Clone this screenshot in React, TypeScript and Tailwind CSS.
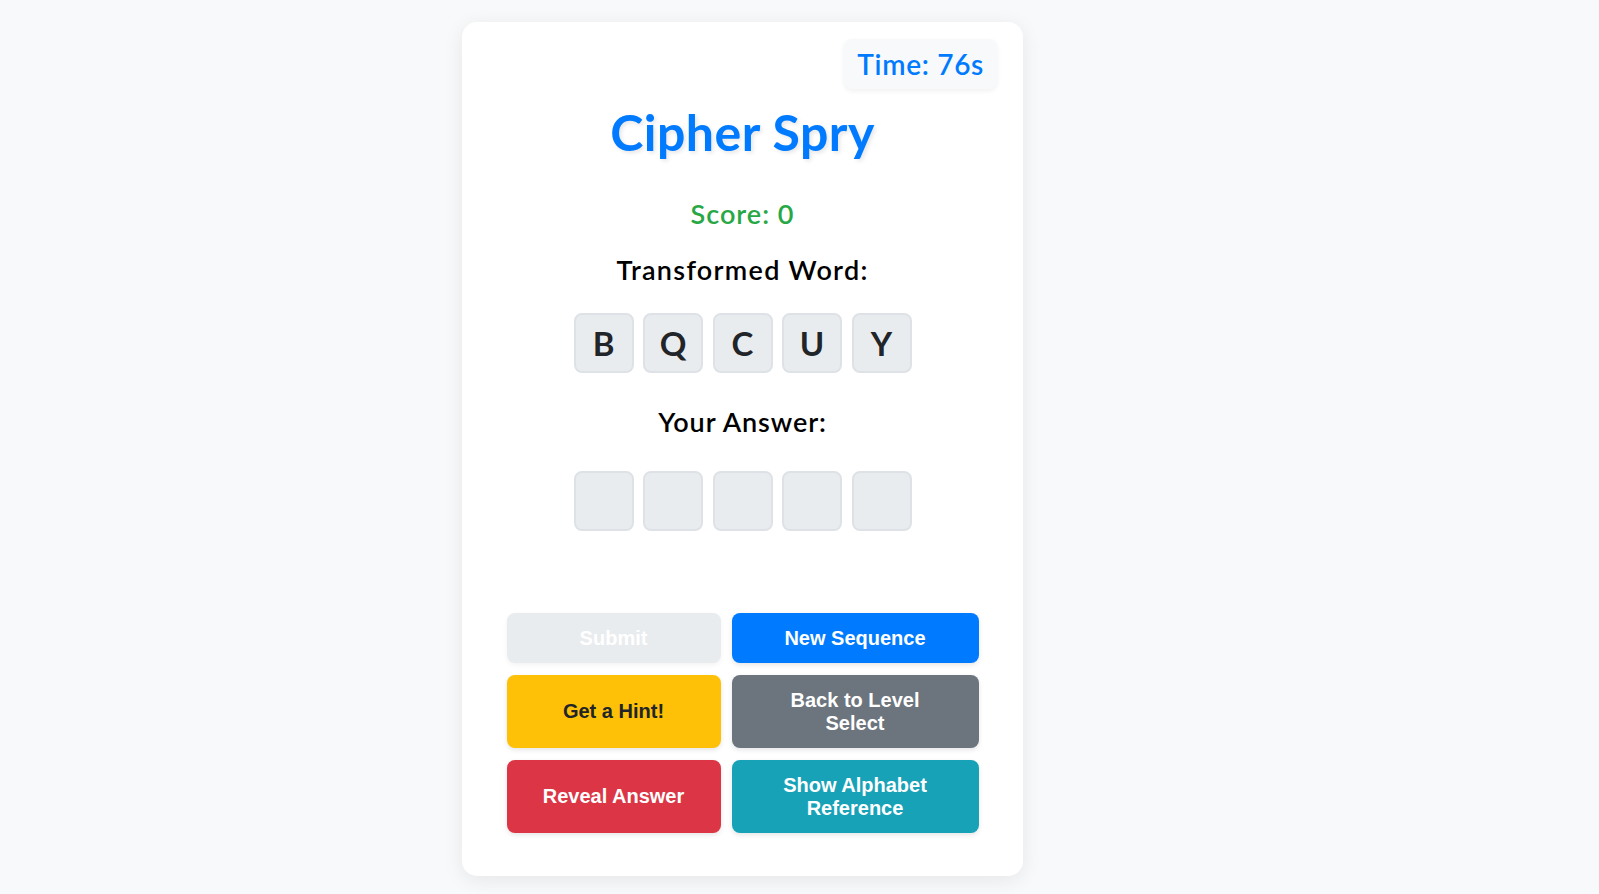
import React from "react";

const heading = { fontFamily: "Lato, 'Noto Sans', sans-serif" };
const btnFont = { fontFamily: "'Liberation Sans', Arial, sans-serif" };

function Tile({ ch }: { ch?: string }) {
  return (
    <div className="w-[60px] h-[60px] rounded-lg bg-[#e9ecef] border-2 border-[#dee2e6] flex items-center justify-center text-[33px] font-bold text-[#212529] leading-none">
      {ch ?? ""}
    </div>
  );
}

export default function App() {
  const word = ["B", "Q", "C", "U", "Y"];
  return (
    <div className="min-h-screen bg-[#f8f9fa] flex justify-center pt-[22px]" style={heading}>
      <div className="relative w-[561px] h-[854px] bg-white rounded-[15px] shadow-[0_4px_20px_rgba(0,0,0,0.08)] pt-[80px] flex flex-col items-center">
        <div className="absolute top-[17px] right-[26px] h-[50px] px-[13px] rounded-lg bg-[#f8f9fa] shadow-[0_2px_5px_rgba(0,0,0,0.06)] text-[28px] leading-[50px] tracking-[0.7px] font-semibold text-[#007bff]">
          Time: 76s
        </div>
        <h1 className="text-[50px] leading-[60px] tracking-[0.5px] font-bold text-[#007bff] text-shadow-[2px_2px_4px_rgba(0,0,0,0.1)]">
          Cipher Spry
        </h1>
        <div className="mt-[36px] text-[27px] leading-[32px] tracking-[1px] font-semibold text-[#28a745]">Score: 0</div>
        <div className="mt-[24px] text-[27px] leading-[32px] tracking-[1.3px] font-semibold text-black">Transformed Word:</div>
        <div className="mt-[27px] flex gap-[9.5px]">
          {word.map((c, i) => (
            <Tile key={i} ch={c} />
          ))}
        </div>
        <div className="mt-[33px] text-[27px] leading-[32px] tracking-[0.9px] font-semibold text-black">Your Answer:</div>
        <div className="mt-[33px] flex gap-[9.5px]">
          {word.map((_, i) => (
            <Tile key={i} />
          ))}
        </div>
        <div
          className="mt-[82px] grid grid-cols-[214px_247px] gap-x-[11px] gap-y-[12px] text-[20px] leading-[23px] font-bold text-white text-center"
          style={btnFont}
        >
          <button className="rounded-lg py-[13.5px] bg-[#e9ecef] text-white shadow-[0_2px_5px_rgba(0,0,0,0.05)]">Submit</button>
          <button className="rounded-lg py-[13.5px] bg-[#007bff] shadow-[0_2px_5px_rgba(0,0,0,0.1)]">New Sequence</button>
          <button className="rounded-lg py-[13.5px] bg-[#ffc107] text-[#212529] shadow-[0_2px_5px_rgba(0,0,0,0.1)]">Get a Hint!</button>
          <button className="rounded-lg py-[13.5px] px-[40px] bg-[#6c757d] shadow-[0_2px_5px_rgba(0,0,0,0.1)]">Back to Level Select</button>
          <button className="rounded-lg py-[13.5px] bg-[#dc3545] shadow-[0_2px_5px_rgba(0,0,0,0.1)]">Reveal Answer</button>
          <button className="rounded-lg py-[13.5px] px-[40px] bg-[#17a2b8] shadow-[0_2px_5px_rgba(0,0,0,0.1)]">Show Alphabet Reference</button>
        </div>
      </div>
      <div className="w-[114px] shrink-0" />
    </div>
  );
}
